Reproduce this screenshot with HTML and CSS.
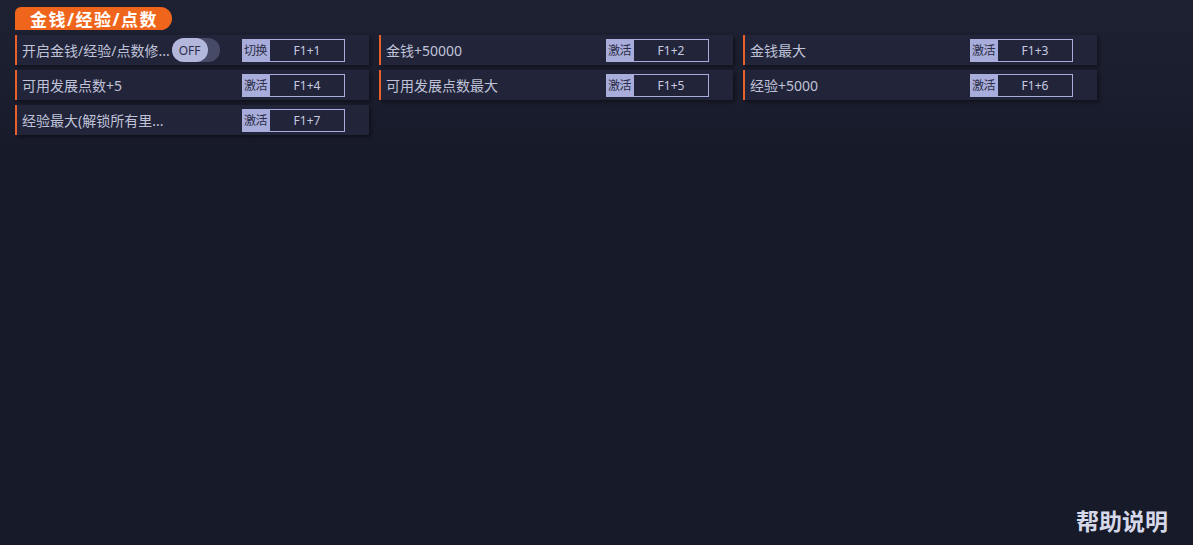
FILE: index.html
```html
<!DOCTYPE html>
<html lang="zh-CN">
<head>
    <meta charset="UTF-8">
    <meta name="viewport" content="width=device-width, initial-scale=1.0">
    <title>修改器</title>
    <link rel="stylesheet" href="styles.css">
</head>
<body>
    <div class="page">
        <section class="group">
            <div class="group-title">金钱/经验/点数</div>
            <div class="cheat-grid">
                <div class="cheat">
                    <span class="cheat-name">开启金钱/经验/点数修...</span>
                    <div class="toggle"><span class="knob">OFF</span></div>
                    <div class="hotkey">
                        <span class="hotkey-label">切换</span>
                        <span class="hotkey-key">F1+1</span>
                    </div>
                </div>
                <div class="cheat">
                    <span class="cheat-name">金钱+50000</span>
                    <div class="hotkey">
                        <span class="hotkey-label">激活</span>
                        <span class="hotkey-key">F1+2</span>
                    </div>
                </div>
                <div class="cheat">
                    <span class="cheat-name">金钱最大</span>
                    <div class="hotkey">
                        <span class="hotkey-label">激活</span>
                        <span class="hotkey-key">F1+3</span>
                    </div>
                </div>
                <div class="cheat">
                    <span class="cheat-name">可用发展点数+5</span>
                    <div class="hotkey">
                        <span class="hotkey-label">激活</span>
                        <span class="hotkey-key">F1+4</span>
                    </div>
                </div>
                <div class="cheat">
                    <span class="cheat-name">可用发展点数最大</span>
                    <div class="hotkey">
                        <span class="hotkey-label">激活</span>
                        <span class="hotkey-key">F1+5</span>
                    </div>
                </div>
                <div class="cheat">
                    <span class="cheat-name">经验+5000</span>
                    <div class="hotkey">
                        <span class="hotkey-label">激活</span>
                        <span class="hotkey-key">F1+6</span>
                    </div>
                </div>
                <div class="cheat">
                    <span class="cheat-name">经验最大(解锁所有里...</span>
                    <div class="hotkey">
                        <span class="hotkey-label">激活</span>
                        <span class="hotkey-key">F1+7</span>
                    </div>
                </div>
            </div>
        </section>

        <footer class="help">帮助说明</footer>
    </div>
</body>
</html>
```

FILE: styles.css
```css
* {
    margin: 0;
    padding: 0;
    box-sizing: border-box;
}

body {
    background: linear-gradient(180deg, #1e2132 0%, #1b1e2e 90px, #171a29 150px, #171a29 100%);
    color: #c3c6da;
    font-family: "Noto Sans", "Noto Sans CJK SC", sans-serif;
    height: 100vh;
    overflow: hidden;
}

.page {
    height: 100%;
    display: flex;
    flex-direction: column;
    padding: 7px 25px 8px 15px;
}

.group-title {
    display: flex;
    align-items: center;
    height: 23px;
    width: 157px;
    padding-left: 15px;
    background-color: #f0651c;
    color: #fff;
    font-size: 17px;
    font-weight: bold;
    letter-spacing: 1.5px;
    border-radius: 6px 12px 12px 0;
}

.cheat-grid {
    margin-top: 5px;
    display: grid;
    grid-template-columns: repeat(3, 354px);
    column-gap: 10px;
    row-gap: 5px;
}

.cheat {
    height: 30px;
    display: flex;
    align-items: center;
    background-color: #22253a;
    border-left: 2px solid #e8602a;
    padding-left: 5px;
    box-shadow: 2px 2px 4px rgba(0, 0, 0, 0.45);
}

.cheat-name {
    font-size: 14px;
    color: #c0c3d8;
    white-space: nowrap;
}

.toggle {
    width: 48px;
    height: 24px;
    margin-left: 2px;
    border-radius: 12px;
    background-color: #464a66;
    display: flex;
    align-items: center;
}

.knob {
    width: 36px;
    height: 24px;
    border-radius: 12px;
    background-color: #b3b7dc;
    color: #2b2e47;
    font-size: 12px;
    display: flex;
    align-items: center;
    justify-content: center;
}

.hotkey {
    margin-left: auto;
    margin-right: 24px;
    display: flex;
    height: 23px;
}

.hotkey-label {
    width: 27px;
    background-color: #a9addb;
    color: #2b2e47;
    font-size: 12px;
    display: flex;
    align-items: center;
    justify-content: center;
    letter-spacing: -0.5px;
}

.hotkey-key {
    width: 76px;
    border: 1px solid #a9addb;
    color: #c8cbe0;
    font-size: 12px;
    display: flex;
    align-items: center;
    justify-content: center;
}

.help {
    margin-top: auto;
    align-self: flex-end;
    font-size: 23px;
    font-weight: bold;
    color: #d5d8e8;
    font-family: "Noto Sans CJK SC", sans-serif;
}
```
